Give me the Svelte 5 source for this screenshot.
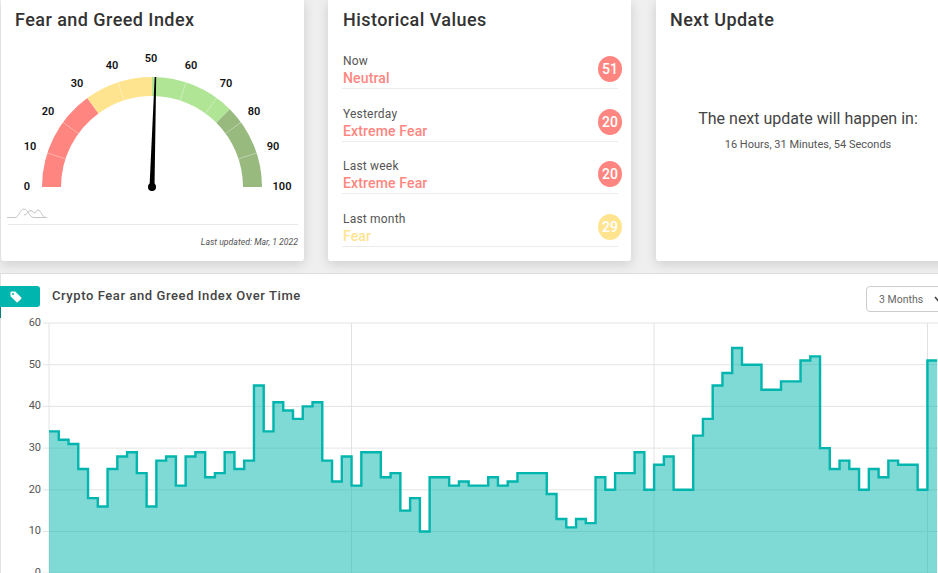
<script>
  const data = [34,32,31,25,18,16,25,28,29,24,16,27,28,21,28,29,23,24,29,25,27,45,34,41,39,37,40,41,27,22,28,21,29,29,23,24,15,18,10,23,23,21,22,21,21,23,21,22,24,24,24,19,13,11,13,12,23,20,24,24,29,20,26,28,20,20,33,37,45,48,54,50,50,44,44,46,46,51,52,30,25,27,25,20,25,23,27,26,26,20,51];
  const x0 = 49, step = 9.76, yTop = 10, per = 4.17;
  const y = (v) => yTop + (60 - v) * per;
  const line = data.map((v, i) => `${i ? 'L' : 'M'}${(x0 + i * step).toFixed(2)} ${y(v).toFixed(2)} L${(x0 + (i + 1) * step).toFixed(2)} ${y(v).toFixed(2)}`).join(' ');
  const end = Math.min(937, x0 + data.length * step);
  const area = `${line} L${end} ${y(0)} L${x0} ${y(0)} Z`;
  const yTicks = [60, 50, 40, 30, 20, 10, 0];
  const xGrid = [351.5, 654, 927.5];

  const cx = 152, cy = 186, ro = 110, ri = 91;
  const pt = (r, pct) => {
    const a = Math.PI * (1 - pct / 100);
    return [cx + r * Math.cos(a), cy - r * Math.sin(a)];
  };
  const seg = (a, b) => {
    const [x1, y1] = pt(ro, a), [x2, y2] = pt(ro, b), [x3, y3] = pt(ri, b), [x4, y4] = pt(ri, a);
    return `M${x1} ${y1} A${ro} ${ro} 0 0 1 ${x2} ${y2} L${x3} ${y3} A${ri} ${ri} 0 0 0 ${x4} ${y4} Z`;
  };
  const segs = [[0,30,'#ff8680'],[30,50,'#ffe48f'],[50,75,'#b0e596'],[75,100,'#98ba7f']];
  const ticks = [10,20,40,60,70,80,90].map((p) => { const a = pt(ri, p), b = pt(ro, p); return { x1: a[0], y1: a[1], x2: b[0], y2: b[1] }; });
  const labels = [[0,27,186],[10,30,146],[20,48,111],[30,77,83],[40,112,65],[50,151,58],[60,191,65],[70,226,83],[80,254,111],[90,273,146],[100,282,186]];

  const hist = [
    { when: 'Now', label: 'Neutral', value: 51, tone: 'red' },
    { when: 'Yesterday', label: 'Extreme Fear', value: 20, tone: 'red' },
    { when: 'Last week', label: 'Extreme Fear', value: 20, tone: 'red' },
    { when: 'Last month', label: 'Fear', value: 29, tone: 'yellow' }
  ];
</script>

<div class="page">
  <div class="top">
    <section class="card">
      <h2>Fear and Greed Index</h2>
      <svg class="gauge" width="304" height="190" viewBox="0 32 304 190" role="img" aria-label="Gauge showing 51">
        {#each segs as s}
          <path d={seg(s[0], s[1])} fill={s[2]} />
        {/each}
        {#each ticks as t}
          <line x1={t.x1} y1={t.y1} x2={t.x2} y2={t.y2} stroke="#fff" stroke-opacity="0.35" stroke-width="1" />
        {/each}
        {#each labels as l}
          <text x={l[1]} y={l[2]} class="glabel" text-anchor="middle" dominant-baseline="middle">{l[0]}</text>
        {/each}
        <path d="M149.5 186 L154.7 76 L156.2 76 L154.5 186 Z" fill="#000" />
        <circle cx="152" cy="186" r="4" fill="#000" />
        <g fill="none" stroke="#c4c4c4" stroke-width="1">
          <path d="M7 216.5 H15 C19 216.5 20 208 24 208 C28 208 29 216.5 34 216.5 H47" />
          <path d="M24 214 C27 214 28 209.5 31 209.5 C33 210 33 212 35 212 C36 212 36 209 38 209 C41 209 42 216.5 46 216.5" />
        </g>
      </svg>
      <div class="updated">Last updated: Mar, 1 2022</div>
    </section>

    <section class="card mid">
      <h2>Historical Values</h2>
      <ul class="hist">
        {#each hist as h}
          <li>
            <div class="htext">
              <span class="when">{h.when}</span>
              <span class="hlabel {h.tone}">{h.label}</span>
            </div>
            <span class="badge {h.tone}">{h.value}</span>
          </li>
        {/each}
      </ul>
    </section>

    <section class="card last">
      <h2>Next Update</h2>
      <div class="next">
        <p class="lead">The next update will happen in:</p>
        <p class="count">16 Hours, 31 Minutes, 54 Seconds</p>
      </div>
    </section>
  </div>

  <section class="chartcard">
    <header class="chead">
      <span class="tag">
        <svg width="12" height="12" viewBox="0 0 12 12" aria-hidden="true">
          <path d="M0.5 1.5 Q0.5 0.5 1.5 0.5 H5.2 L11.3 6.6 Q11.8 7.2 11.3 7.7 L7.7 11.3 Q7.2 11.8 6.6 11.3 L0.5 5.2 Z M3 2 A1 1 0 1 0 3 4 A1 1 0 1 0 3 2 Z" fill="#fff" fill-rule="evenodd" />
        </svg>
      </span>
      <h3>Crypto Fear and Greed Index Over Time</h3>
      <div class="select">
        <span>3 Months</span>
        <svg width="8" height="6" viewBox="0 0 8 6" aria-hidden="true"><path d="M1 1 L4 4.5 L7 1" fill="none" stroke="#444" stroke-width="1.6" /></svg>
      </div>
    </header>
    <svg class="chart" width="938" height="260" viewBox="0 0 938 260" role="img" aria-label="Index over time">
      {#each yTicks as t}
        <line x1="43" x2="938" y1={y(t)} y2={y(t)} stroke="#e4e4e4" stroke-width="1" />
        <text x="41" y={y(t)} class="ylabel" text-anchor="end" dominant-baseline="middle">{t}</text>
      {/each}
      <line x1="49" x2="49" y1="10" y2="260" stroke="#e4e4e4" />
      {#each xGrid as gx}
        <line x1={gx} x2={gx} y1="10" y2="260" stroke="#e2e2e2" />
      {/each}
      <path d={area} fill="#00b5ad" fill-opacity="0.5" stroke="none" />
      <path d={line} fill="none" stroke="#00b5ad" stroke-width="2.4" stroke-linejoin="miter" />
    </svg>
  </section>
</div>

<style>
  :global(body) {
    margin: 0;
    background: #efefef;
    overflow: hidden;
  }
  .page {
    width: 938px;
    height: 573px;
    overflow: hidden;
    font-family: Roboto, "Liberation Sans", sans-serif;
    color: #333;
  }
  .top {
    display: grid;
    grid-template-columns: 303px 303px 1fr;
    column-gap: 24px;
    padding-left: 1px;
    height: 261px;
    margin-bottom: 12px;
  }
  .card {
    background: #fff;
    border-radius: 0 0 3px 3px;
    box-shadow: 0 3px 12px rgba(0, 0, 0, 0.14);
    padding: 0 14px;
    display: flex;
    flex-direction: column;
    min-width: 0;
    height: 261px;
    box-sizing: border-box;
  }
  .card.mid {
    padding-left: 15px;
  }
  .card.last {
    margin-left: 1px;
    margin-right: -20px;
  }
  h2 {
    margin: 0;
    padding-top: 9px;
    font-size: 18px;
    line-height: 22px;
    font-weight: 500;
    letter-spacing: 0.45px;
    color: #333;
  }
  .gauge {
    display: block;
    margin: 2px -14px 0 -15px;
    flex: none;
  }
  .glabel {
    font-size: 11px;
    font-weight: 600;
    fill: #111;
  }
  .updated {
    border-top: 1px solid #e9e9e9;
    margin: 1px -8px 0 -7px;
    padding-top: 12px;
    text-align: right;
    font-size: 8.7px;
    line-height: 11px;
    font-style: italic;
    color: #555;
  }
  .hist {
    list-style: none;
    margin: 5.4px 0 0 -1px;
    padding: 0;
    display: flex;
    flex-direction: column;
  }
  .hist li {
    display: flex;
    justify-content: space-between;
    align-items: flex-end;
    height: 52.6px;
    box-sizing: border-box;
    padding-bottom: 1px;
    padding-left: 1px;
    border-bottom: 1px solid #ececec;
    margin-right: -1px;
  }
  .htext {
    display: flex;
    flex-direction: column;
  }
  .when {
    font-size: 12px;
    line-height: 16px;
    color: #555;
    letter-spacing: 0.2px;
  }
  .hlabel {
    font-size: 14px;
    line-height: 18px;
    font-weight: 500;
    letter-spacing: 0.15px;
  }
  .hlabel.red { color: #ff8680; }
  .hlabel.yellow { color: #ffe48f; }
  .badge {
    width: 24px;
    height: 26px;
    border-radius: 50%;
    display: flex;
    align-items: center;
    justify-content: center;
    color: #fff;
    font-size: 14px;
    font-weight: 500;
    margin-right: -4px;
    margin-bottom: 5px;
  }
  .badge.red { background: #ff8680; }
  .badge.yellow { background: #ffe48f; }
  .next {
    text-align: center;
    padding-top: 78px;
    margin-right: -2px;
  }
  .next p { margin: 0; }
  .lead {
    font-size: 16px;
    line-height: 20px;
    color: #444;
  }
  .count {
    margin-top: 9px !important;
    font-size: 11px;
    line-height: 14px;
    color: #555;
  }
  .chartcard {
    background: #fff;
    border-top: 1px solid #dedede;
    border-left: 1px solid #e3e3e3;
    box-sizing: border-box;
    width: 938px;
    height: 300px;
  }
  .chead {
    display: flex;
    align-items: flex-start;
    height: 39px;
    padding-top: 12px;
    box-sizing: border-box;
  }
  .tag {
    width: 40px;
    height: 21px;
    margin-left: -1px;
    background: #00b5ad;
    border-radius: 0 3px 3px 0;
    display: flex;
    align-items: center;
    justify-content: flex-start;
    padding-left: 10px;
    box-sizing: border-box;
    flex: none;
    position: relative;
  }
  .tag::after {
    content: "";
    position: absolute;
    left: 0;
    top: 21px;
    width: 1px;
    height: 11px;
    background: #00827c;
  }
  h3 {
    margin: 0 0 0 12px;
    font-size: 13px;
    line-height: 20px;
    font-weight: 500;
    letter-spacing: 0.58px;
    color: #444;
  }
  .select {
    margin-left: auto;
    margin-right: -19px;
    width: 91px;
    height: 26px;
    border: 1px solid #ccc;
    border-radius: 4px;
    box-sizing: border-box;
    display: flex;
    align-items: center;
    gap: 11px;
    padding-left: 12px;
    font-size: 10.5px;
    color: #666;
    flex: none;
  }
  .chart {
    display: block;
    margin-left: -1px;
  }
  .ylabel {
    font-size: 11px;
    fill: #555;
  }
</style>
